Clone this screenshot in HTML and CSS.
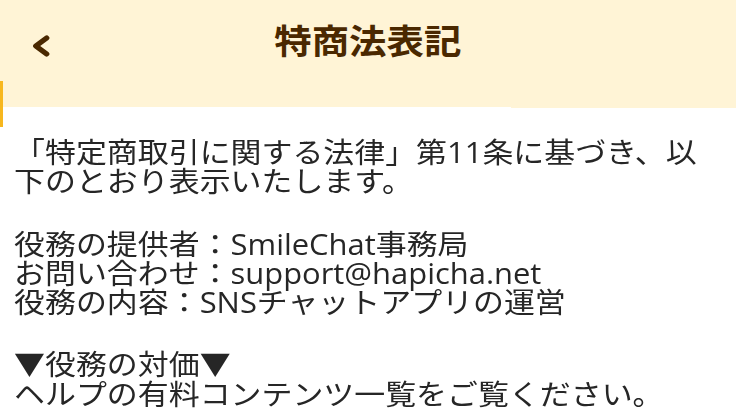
FILE: index.html
```html
<!DOCTYPE html>
<html lang="ja">
<head>
  <meta charset="UTF-8">
  <meta name="viewport" content="width=device-width, initial-scale=1.0">
  <title>特商法表記</title>
  <link rel="stylesheet" href="styles.css">
</head>
<body>
<div class="page">
  <div class="header">
    <a class="back" href="#">
      <svg width="20" height="22" viewBox="0 0 20 22">
        <path d="M15 3 L5 11 L15 19" fill="none" stroke="#4a2800" stroke-width="5" stroke-linecap="round" stroke-linejoin="round"/>
      </svg>
    </a>
    <h1>特商法表記</h1>
  </div>

  <div class="content">
    <p>「特定商取引に関する法律」第11条に基づき、以下のとおり表示いたします。</p>
    <p>役務の提供者：SmileChat事務局<br>
    お問い合わせ：support@hapicha.net<br>
    役務の内容：SNSチャットアプリの運営</p>
    <p>▼役務の対価▼<br>
    ヘルプの有料コンテンツ一覧をご覧ください。</p>
  </div>
</div>
<div class="edge"></div>
</body>
</html>
```

FILE: styles.css
```css
body {
  margin: 0;
  background: #ffffff;
  font-family: "Open Sans", "Noto Sans CJK JP", sans-serif;
  overflow: hidden;
}
/* the app screen is drawn a little wide */
.page {
  width: 678px;
  transform: scaleX(1.085);
  transform-origin: 0 0;
}
.header {
  position: relative;
  height: 107px;
  background-color: #fff4d6;
}
.header h1 {
  margin: 0;
  padding-top: 18px;
  text-align: center;
  font-size: 34.5px;
  line-height: 46px;
  font-weight: bold;
  color: #4a2800;
}
.back {
  position: absolute;
  left: 28px;
  top: 35px;
  display: block;
}
.edge {
  position: absolute;
  left: 0;
  top: 81px;
  width: 3px;
  height: 46px;
  background: #f7b71e;
}
.content {
  padding: 31px 13px 0;
  color: #262626;
  font-size: 28.5px;
  line-height: 29.3px;
}
.content p {
  margin: 0 0 33px;
}
.content p:last-child {
  margin-bottom: 0;
}
```
